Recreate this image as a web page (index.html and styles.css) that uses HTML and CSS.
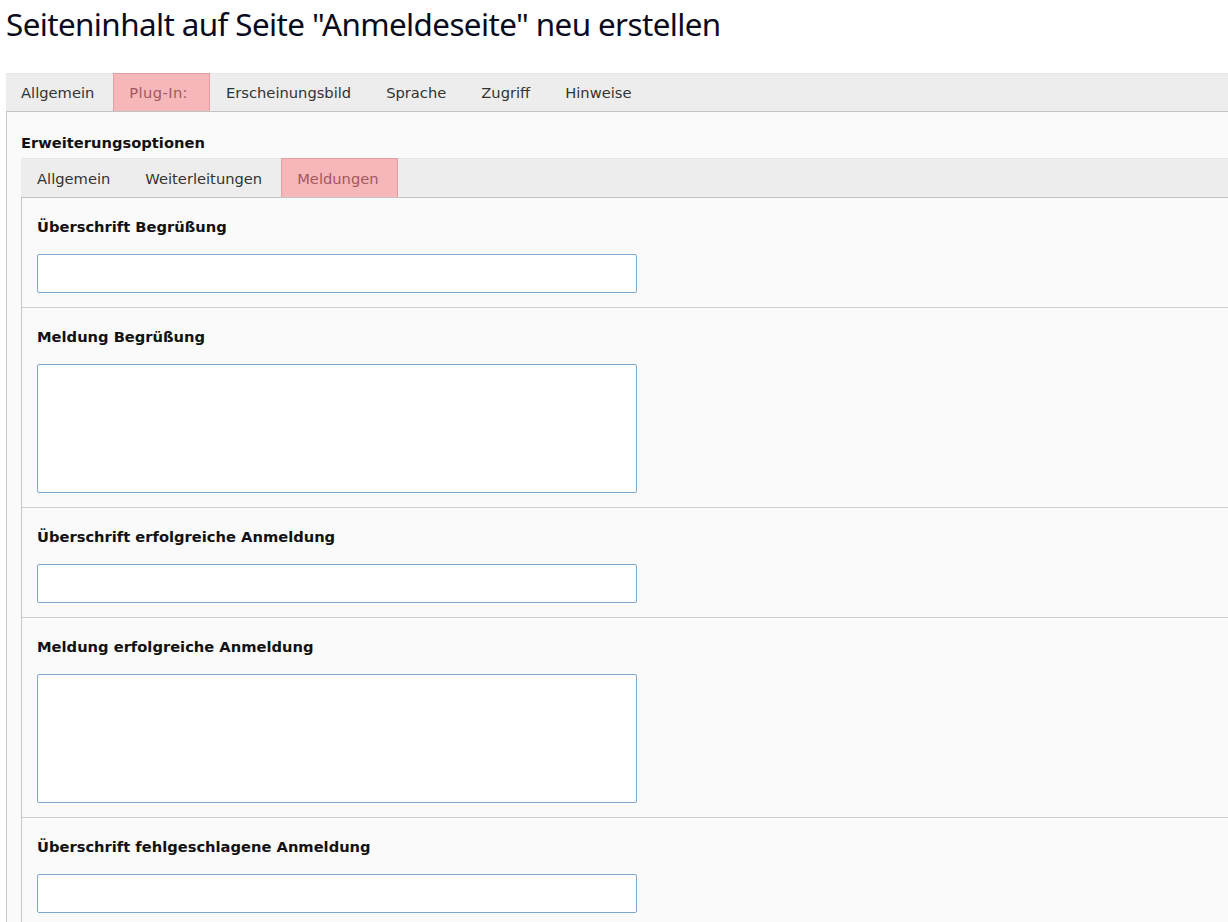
FILE: index.html
```html
<!DOCTYPE html>
<html lang="de">
<head>
<meta charset="utf-8">
<title>Seiteninhalt neu erstellen</title>
<link rel="stylesheet" href="styles.css">
</head>
<body>
<h1 class="page-title">Seiteninhalt auf Seite "Anmeldeseite" neu erstellen</h1>
<div class="outer">
  <div class="tabbar">
    <span class="tab">Allgemein</span>
    <span class="tab active">Plug-In:</span>
    <span class="tab">Erscheinungsbild</span>
    <span class="tab">Sprache</span>
    <span class="tab">Zugriff</span>
    <span class="tab">Hinweise</span>
  </div>
  <div class="panel">
    <div class="section-title">Erweiterungsoptionen</div>
    <div class="inner">
      <div class="tabbar">
        <span class="tab">Allgemein</span>
        <span class="tab">Weiterleitungen</span>
        <span class="tab active">Meldungen</span>
      </div>
      <div class="rows">
        <div class="row">
          <label class="label">Überschrift Begrüßung</label>
          <input class="field" type="text">
        </div>
        <div class="row">
          <label class="label">Meldung Begrüßung</label>
          <textarea class="field area"></textarea>
        </div>
        <div class="row">
          <label class="label">Überschrift erfolgreiche Anmeldung</label>
          <input class="field" type="text">
        </div>
        <div class="row">
          <label class="label">Meldung erfolgreiche Anmeldung</label>
          <textarea class="field area"></textarea>
        </div>
        <div class="row">
          <label class="label">Überschrift fehlgeschlagene Anmeldung</label>
          <input class="field" type="text">
        </div>
      </div>
    </div>
  </div>
</div>
</body>
</html>
```

FILE: styles.css
```css
html, body {
  margin: 0;
  padding: 0;
  background: #ffffff;
  overflow: hidden;
}
body {
  font-family: "DejaVu Sans", Verdana, sans-serif;
  font-size: 14.7px;
  color: #333333;
}
.page-title {
  margin: 0;
  padding: 3px 0 0 6px;
  height: 73px;
  box-sizing: border-box;
  font-family: "Noto Sans", "Open Sans", sans-serif;
  font-weight: 400;
  font-size: 31.4px;
  line-height: 42px;
  color: #0a0a1e;
  letter-spacing: -0.6px;
  white-space: nowrap;
}
.outer {
  margin-left: 6px;
  width: 1300px;
}
.tabbar {
  display: flex;
  height: 38px;
  background: #ededed;
  border-top: 1px solid #e6e6e6;
  border-bottom: 1px solid #c3c3c3;
  box-sizing: content-box;
}
.outer > .tabbar {
  height: 37px;
}
.tab {
  display: flex;
  align-items: center;
  padding: 0 18px 0 15px;
  border-left: 1px solid transparent;
  border-right: 1px solid transparent;
  color: #333333;
  white-space: nowrap;
}
.outer > .tabbar > .tab:first-child {
  padding-left: 14px;
}
.outer > .tabbar > .tab.active {
  padding-right: 21px;
  letter-spacing: 0.4px;
}
.tab.active {
  background: #f5b7ba;
  border-left-color: #e3a0a4;
  border-right-color: #e3a0a4;
  color: #a4585d;
  margin-top: -1px;
  border-top: 1px solid #e3a0a4;
}
.panel {
  background: #fafafa;
  border-left: 1px solid #c8c8c8;
  padding: 16px 0 0 14px;
  height: 900px;
}
.section-title {
  font-weight: bold;
  color: #111111;
  line-height: 30px;
  height: 30px;
}
.inner {
  background: #fafafa;
}
.rows {
  border-left: 1px solid #c8c8c8;
}
.row {
  padding: 20px 15px 14px 15px;
  border-bottom: 1px solid #cfcfcf;
  display: flex;
  flex-direction: column;
  align-items: flex-start;
}
.label {
  font-weight: bold;
  color: #111111;
  line-height: 18px;
  height: 18px;
  margin-bottom: 18px;
}
.field {
  display: block;
  width: 600px;
  height: 39px;
  box-sizing: border-box;
  margin: 0;
  padding: 6px 10px;
  border: 1px solid #7ea8cd;
  border-radius: 2px;
  background: #ffffff;
  font-family: inherit;
  font-size: 14px;
  resize: none;
}
.field.area {
  height: 129px;
}
```
